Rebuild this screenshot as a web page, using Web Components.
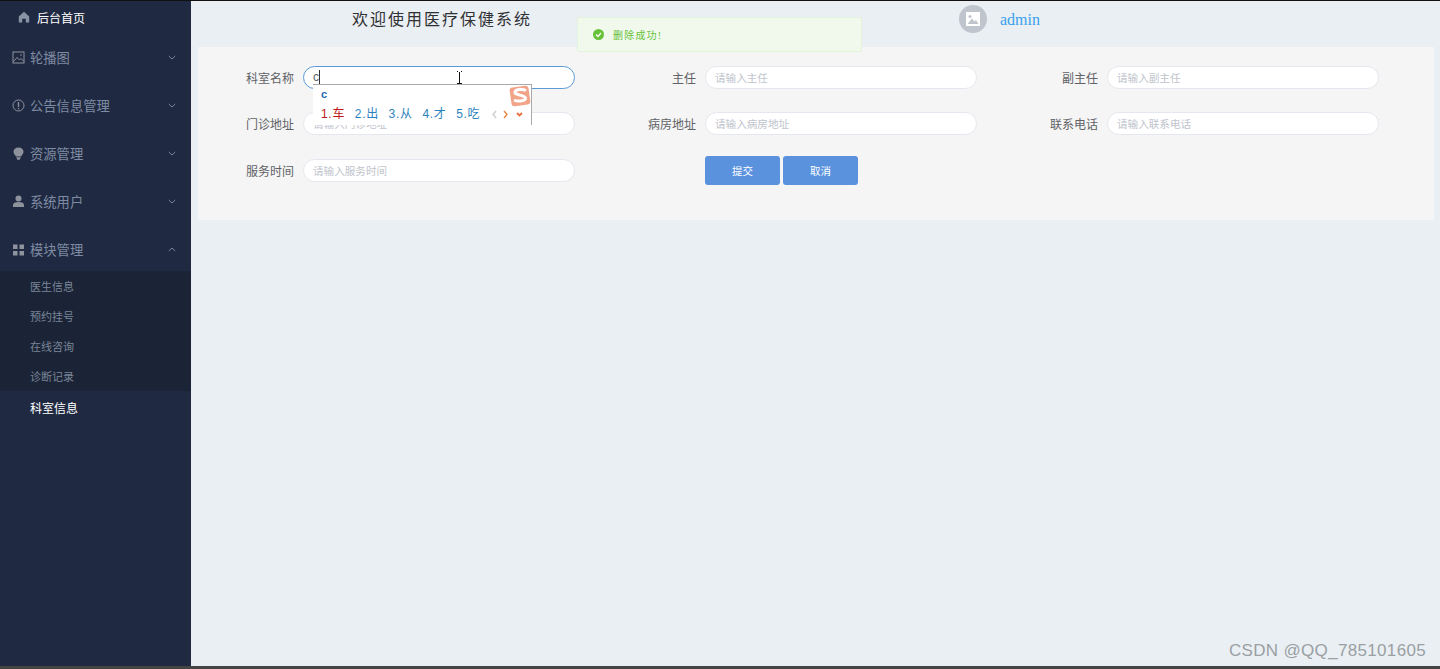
<!DOCTYPE html>
<html lang="zh"><head><meta charset="utf-8"><title>医疗保健系统</title>
<style>
html,body{margin:0;height:100%;overflow:hidden}
body{font-family:"Liberation Sans","Noto Sans CJK SC",sans-serif}
</style></head><body>
<app-shell>
  <side-nav slot="side">
    <nav-home>后台首页</nav-home>
    <nav-group icon="image" label="轮播图"></nav-group>
    <nav-group icon="info" label="公告信息管理"></nav-group>
    <nav-group icon="bulb" label="资源管理"></nav-group>
    <nav-group icon="user" label="系统用户"></nav-group>
    <nav-group icon="grid" label="模块管理" open>
      <nav-sub>医生信息</nav-sub><nav-sub>预约挂号</nav-sub><nav-sub>在线咨询</nav-sub><nav-sub>诊断记录</nav-sub>
    </nav-group>
    <nav-sub active>科室信息</nav-sub>
  </side-nav>
  <top-bar slot="top" user="admin">欢迎使用医疗保健系统</top-bar>
  <form-panel slot="main">
    <form-field label="科室名称" value="c" focused><ime-popup></ime-popup></form-field>
    <form-field label="主任" placeholder="请输入主任"></form-field>
    <form-field label="副主任" placeholder="请输入副主任"></form-field>
    <form-field label="门诊地址" placeholder="请输入门诊地址"></form-field>
    <form-field label="病房地址" placeholder="请输入病房地址"></form-field>
    <form-field label="联系电话" placeholder="请输入联系电话"></form-field>
    <form-field label="服务时间" placeholder="请输入服务时间"></form-field>
    <form-actions><blue-btn>提交</blue-btn><blue-btn>取消</blue-btn></form-actions>
  </form-panel>
  <toast-msg slot="overlay">删除成功!</toast-msg>
  <water-mark slot="overlay">CSDN @QQ_785101605</water-mark>
</app-shell>
<script>
const ICONS={
 image:'<svg width="13" height="13" viewBox="0 0 13 13" fill="none" stroke="currentColor"><rect x="1" y="1" width="11" height="11"/><path d="M1.5 10.5 5 6.5l2.5 2.5 1.5-1.5 3 3"/><circle cx="9" cy="4" r=".8" fill="currentColor" stroke="none"/></svg>',
 info:'<svg width="13" height="13" viewBox="0 0 13 13" fill="none" stroke="currentColor"><circle cx="6.5" cy="6.5" r="5.5"/><path d="M6.5 3v5M6.5 9v1.2" stroke-width="1.3"/></svg>',
 bulb:'<svg width="13" height="13" viewBox="0 0 13 13" fill="currentColor"><path d="M6.5 0.5C9.500 .5 11.500 2.300 11.500 4.800c0 1.900-1.500 2.900-2.400 4.700H3.900C3 7.700 1.500 6.700 1.500 4.800 1.500 2.300 3.500 .5 6.500.5Z"/><path d="M4.300 10.200h4.400L7.800 12.700H5.200Z"/></svg>',
 user:'<svg width="13" height="13" viewBox="0 0 13 13" fill="currentColor"><circle cx="6.500" cy="3.500" r="3"/><path d="M1 12v-2c0-1.800 2-3 5.500-3S12 8.200 12 10v2Z"/></svg>',
 grid:'<svg width="13" height="13" viewBox="0 0 13 13" fill="currentColor"><rect x="1" y="1.500" width="4.500" height="4.500"/><rect x="7.500" y="1.500" width="4.500" height="4.500"/><rect x="1" y="8" width="4.500" height="4.500"/><rect x="7.500" y="8" width="4.500" height="4.500"/></svg>'
};
function def(name,html){
  customElements.define(name,class extends HTMLElement{
    connectedCallback(){
      if(this.shadowRoot)return;
      const r=this.attachShadow({mode:'open'});
      r.innerHTML=typeof html==='function'?html(this):html;
    }
  });
}
def('app-shell',`<style>
:host{display:flex;flex-direction:column;height:669px;background:#eaeff3;position:relative;overflow:hidden}
.line{height:1px;background:#111;flex:none}
.body{flex:1;display:flex;min-height:0}
.bottom{height:3px;background:#444;flex:none}
.side{width:191px;flex:none;background:#1f2a42}
.right{flex:1;display:flex;flex-direction:column;min-width:0}
</style><div class="line"></div><div class="body"><div class="side"><slot name="side"></slot></div><div class="right"><slot name="top"></slot><slot name="main"></slot></div></div><div class="bottom"></div><slot name="overlay"></slot>`);
def('side-nav',`<style>:host{display:block;font-size:13.3px;color:#8691a6}</style><slot></slot>`);
def('nav-home',`<style>
:host{display:flex;align-items:center;height:32px;padding-left:18px;gap:7px;color:#fff;font-size:12px}
svg{color:#8a93a5;flex:none}
</style><svg width="12" height="12" viewBox="0 0 12 12" fill="currentColor"><path d="M6 .8 11.200 5.500V11.500H7.800V7.800H4.200V11.500H.8V5.500Z"/></svg><span><slot></slot></span>`);
def('nav-group',h=>{const open=h.hasAttribute('open');return `<style>
:host{display:block}
.row{display:flex;align-items:center;height:${open?46:48}px;padding:${open?'2px':'0'} 0 0 12px;box-sizing:border-box}
.ic{width:13px;height:13px;flex:none;color:#8d929c;margin-right:5px;display:flex}
.lb{flex:1;color:#7f8ba2}
.ch{flex:none;margin-right:15px;color:#7b8597;display:flex}
.sub{background:#1a2436}
</style><div class="row"><span class="ic">${ICONS[h.getAttribute('icon')]}</span><span class="lb">${h.getAttribute('label')}</span><span class="ch"><svg width="8" height="5" viewBox="0 0 8 5" fill="none" stroke="currentColor"><path d="${open?'M.8 4 4 1l3.200 3':'M.8 1 4 4l3.200-3'}"/></svg></span></div><div class="sub"><slot></slot></div>`});
def('nav-sub',h=>`<style>
:host{display:flex;align-items:center;height:${h.hasAttribute('active')?32:30}px;padding-left:30px;font-size:${h.hasAttribute('active')?12:11}px;color:${h.hasAttribute('active')?'#fff':'#7a8498'}}
</style><slot></slot>`);
def('top-bar',h=>`<style>
:host{display:flex;align-items:flex-start;height:46px;flex:none;padding:4px 0 0 161px;box-sizing:border-box;font-family:"Liberation Serif","Noto Sans CJK SC",serif}
.t{font-size:16px;letter-spacing:2px;line-height:28px;color:#303133;width:607px;white-space:nowrap;margin-top:1px}
.av{width:28px;height:28px;border-radius:50%;background:#c0c4cc;display:flex;align-items:center;justify-content:center;flex:none}
.u{margin-left:13px;font-size:16px;line-height:28px;color:#3a9ff0;margin-top:1px}
</style><div class="t"><slot></slot></div><div class="av"><svg width="14" height="14" viewBox="0 0 14 14"><path fill="#fff" d="M0 0H14V14H0Z"/><circle cx="4" cy="4.500" r="1.500" fill="#c0c4cc"/><path fill="#c0c4cc" d="M1.500 12 6 6.500 8.500 9.500 10 8l2.500 4Z"/></svg></div><div class="u">${h.getAttribute('user')}</div>`);
def('form-panel',`<style>
:host{display:grid;grid-template-columns:repeat(3,400px);grid-template-rows:29px 30px 29px;column-gap:2px;row-gap:17px;align-items:start;margin:0 6px 0 7px;padding:16px 0 35px 0;background:#f5f5f5;height:173px;box-sizing:border-box}
</style><slot></slot>`);
def('form-field',h=>{const v=h.getAttribute('value'),f=h.hasAttribute('focused'),p=h.getAttribute('placeholder');return `<style>
:host{display:flex;align-items:center;height:29px;position:relative;margin-left:-15px;width:400px}
label{width:120px;padding-right:9px;box-sizing:border-box;text-align:right;font-size:12px;color:#606266;flex:none}
.in{width:272px;height:23px;box-sizing:border-box;border-radius:11.5px;background:#fff;border:1px solid ${f?'#5b9bd5':'#e4e7ed'};flex:none;display:flex;align-items:center;padding-left:9px;font-size:10.600px;color:#c0c4cc;white-space:nowrap;overflow:hidden}
.val{color:#606266;font-size:12px;line-height:15px;border-right:1px solid #333}
</style><label>${h.getAttribute('label')}</label><div class="in">${v?`<span class="val">${v}</span>`:`<span>${p}</span>`}</div><slot></slot>`});
def('form-actions',`<style>
:host{display:flex;gap:3px;margin-left:105px;height:29px}
</style><slot></slot>`);
def('blue-btn',`<style>
:host{display:flex;width:75px;height:29px;align-items:center;justify-content:center;background:#5a92de;color:#fff;font-size:10.500px;border-radius:3px}
</style><slot></slot>`);
def('ime-popup',`<style>
:host{display:block;position:absolute;left:130px;top:21px;width:219px;height:41px;background:#fff;border-top:1px solid #aaa;border-right:1px solid #aaa;box-sizing:border-box;z-index:3}
.py{position:absolute;left:8px;top:2px;font-size:11px;font-weight:700;color:#2468b8;line-height:15px}
.row{position:absolute;left:8px;top:22px;display:flex;font-size:12px;line-height:15px;color:#2b83bd;white-space:nowrap}
.row span{width:33.800px;letter-spacing:.7px}
.row span:first-child{color:#c01818}
.arr{position:absolute;left:178px;top:25px}
.logo{position:absolute;right:-1px;top:-1px}
.beam{position:absolute;left:143px;top:-14px}
</style><div class="py">c</div><div class="row"><span>1.车</span><span>2.出</span><span>3.从</span><span>4.才</span><span>5.吃</span></div>
<svg class="arr" width="34" height="9" viewBox="0 0 34 9" fill="none" stroke-width="1.300"><path stroke="#ccc" d="M5 1 2 4.500 5 8"/><path stroke="#e8803c" d="M13 1l3 3.500L13 8"/><path stroke="#e8703c" stroke-width="1.800" d="M26 3l2.500 2.500L31 3"/></svg>
<svg class="logo" width="24" height="24" viewBox="0 0 24 24"><rect x="2.500" y="2.500" width="19" height="19" rx="3" fill="#f2a488" transform="rotate(-8 12 12)"/><path d="M18 6.500c-3-1.500-10-1.500-11 1.500s9.500 3 10.500 6-7.500 4-11.500 2" fill="none" stroke="#fff" stroke-width="3"/></svg>
<svg class="beam" width="7" height="13" viewBox="0 0 7 13" fill="none" stroke="#111"><path d="M3.500 1V12M1 12.500H6M1 .5H2M5 .5H6"/></svg>`);
def('toast-msg',`<style>
:host{display:flex;align-items:center;position:absolute;left:577px;top:17px;width:285px;height:35px;box-sizing:border-box;background:#f0f9eb;border:1px solid #e1f3d8;border-radius:2px;padding-left:15px;gap:9px;color:#67c23a;font-size:10px;letter-spacing:1.200px;font-family:"Liberation Serif","Noto Sans CJK SC",serif;z-index:4}
</style><svg width="11" height="11" viewBox="0 0 11 11"><circle cx="5.500" cy="5.500" r="5.500" fill="#67c23a"/><path d="M3 5.500 5 7.500 8 4" fill="none" stroke="#fff" stroke-width="1.200"/></svg><span><slot></slot></span>`);
def('water-mark',`<style>
:host{position:absolute;right:14px;top:641px;font-size:17px;line-height:20px;color:#9a9fa3;letter-spacing:.33px;z-index:5;white-space:nowrap;font-family:"Liberation Sans",sans-serif}
</style><slot></slot>`);
</script>
</body></html>
